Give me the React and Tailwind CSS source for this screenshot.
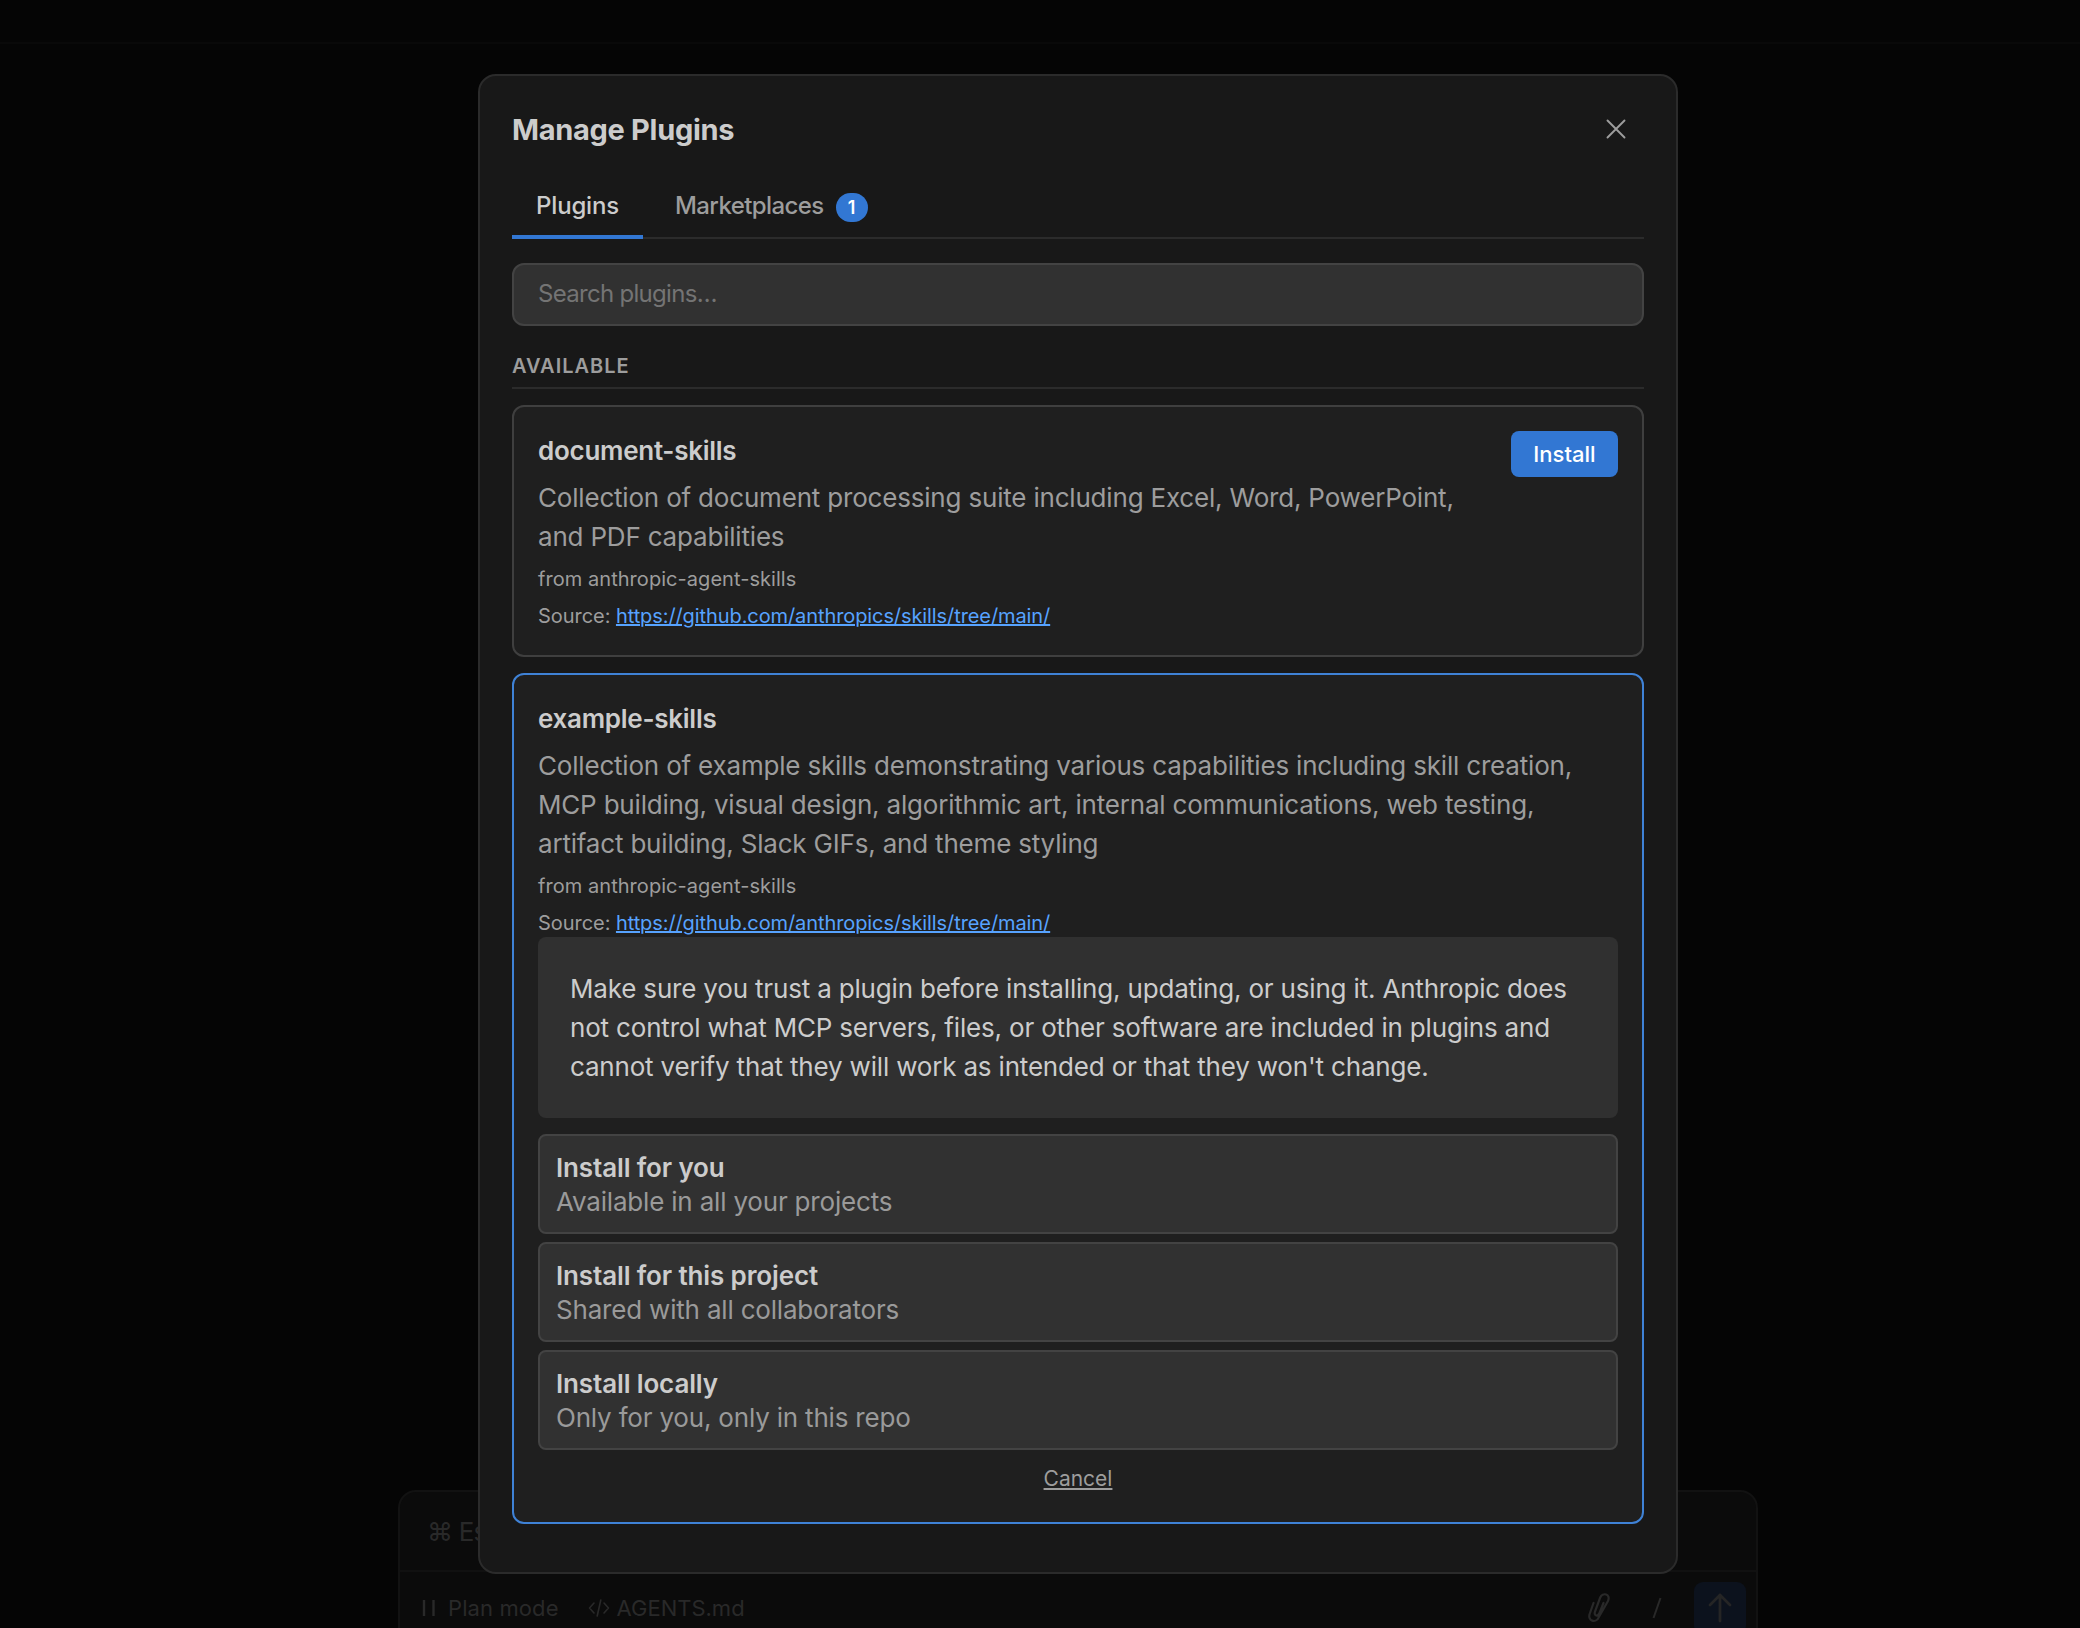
import React from "react";

function Plugin({ name, description, action, active, children }) {
  return (
    <section
      className={
        active
          ? "h-[851px] rounded-xl border-2 border-[#3f82d6] bg-[#1f1f1f] px-6 pt-6"
          : "h-[252px] rounded-xl border-2 border-[#3f3f3f] bg-[#1f1f1f] px-6 pt-6"
      }
    >
      <div className="flex items-start justify-between gap-4">
        <div className="min-w-0">
          <h3 className="text-[26px]/[39px] font-semibold tracking-[-0.27px] text-[#cccccc]">{name}</h3>
          <div className="mt-2 text-[26px]/[39px] tracking-[-0.19px] text-[#9d9d9d]">
            {description.map((line) => (
              <p key={line} className="whitespace-nowrap">{line}</p>
            ))}
          </div>
          <p className="mt-2.5 text-[20px]/[26px] tracking-[0.05px] text-[#9d9d9d]">from anthropic-agent-skills</p>
          <p className="mt-[11px] mb-px text-[20px]/[26px] tracking-[-0.05px] text-[#9d9d9d]">
            Source:{" "}
            <a className="tracking-[-0.09px] text-[#57a3ff] underline">https://github.com/anthropics/skills/tree/main/</a>
          </p>
        </div>
        {action}
      </div>
      {children}
    </section>
  );
}

function Option({ title, detail }) {
  return (
    <button className="block h-[100px] w-full rounded-lg border-2 border-[#434343] bg-[#313131] px-4 pt-[15px] pb-[13px] text-left text-[26px]/[34px]">
      <div className="font-semibold tracking-[-0.13px] text-[#cccccc]">{title}</div>
      <div className="tracking-[-0.19px] text-[#9a9a9a]">{detail}</div>
    </button>
  );
}

function Composer() {
  return (
    <div className="absolute top-[1490px] left-[398px] h-[200px] w-[1360px] rounded-[18px] border-2 border-[#121212] bg-[#0b0b0b] text-[#292929]">
      <div className="flex h-[80px] items-center border-b-2 border-[#111111] px-[27px] text-[26px] tracking-[-0.8px]">⌘ Esc to focus</div>
      <div className="flex h-[72px] items-center pr-[10px] pl-[22px] text-[22px]">
        <svg width="14" height="18" viewBox="0 0 14 18" stroke="currentColor" strokeWidth="2.4">
          <path d="M2 1v16M11.5 1v16" />
        </svg>
        <span className="ml-3 tracking-[0.1px]">Plan mode</span>
        <svg className="ml-[29px]" width="22" height="18" viewBox="0 0 22 18" fill="none" stroke="currentColor" strokeWidth="1.6" strokeLinecap="round" strokeLinejoin="round">
          <path d="M6 4L1.5 9L6 14M16 4l4.5 5L16 14M12.8 1L9.2 17" />
        </svg>
        <span className="ml-[7px]">AGENTS.md</span>
        <div className="flex-1" />
        <svg width="24" height="30" viewBox="0 0 24 30" fill="none" stroke="currentColor" strokeWidth="2.2" strokeLinecap="round">
          <path d="M6.5 10L2.8 20.5C0 28 9 31 12 23.8L21 8C24 1 15.5-1 13.2 4.5L8 18.5C6.5 23 11 24 12.5 20L16.5 10" />
        </svg>
        <svg className="ml-[41px]" width="10" height="22" viewBox="0 0 10 22" stroke="currentColor" strokeWidth="2">
          <path d="M8.5 1L1.500 21" />
        </svg>
        <div className="ml-8 flex size-[52px] items-center justify-center rounded-[9px] bg-[#0c121d]">
          <svg width="24" height="30" viewBox="0 0 24 30" fill="none" stroke="#252525" strokeWidth="2.8" strokeLinecap="round" strokeLinejoin="round">
            <path d="M12 28V2M2 12L12 2l10 10" />
          </svg>
        </div>
      </div>
    </div>
  );
}

export default function App() {
  return (
    <div className="relative h-[1628px] w-[2080px] overflow-hidden bg-[#050505] font-['Inter',sans-serif]">
      <div className="h-11 border-b-2 border-[#090909]" />
      <Composer />
      <main className="absolute top-[74px] left-[478px] h-[1500px] w-[1200px] rounded-[18px] border-2 border-[#2b2b2b] bg-[#181818] px-8">
        <header className="flex h-[105px] items-center justify-between">
          <h1 className="pt-0.5 text-[29px] font-bold tracking-[-0.3px] text-[#cccccc]">Manage Plugins</h1>
          <svg className="mr-[18px]" width="20" height="20" viewBox="0 0 20 20" stroke="#9d9d9d" strokeWidth="1.9" strokeLinecap="round">
            <path d="M1.5 1.5l17 17M18.5 1.5l-17 17" />
          </svg>
        </header>
        <nav className="flex h-[58px] border-b-2 border-[#2b2b2b] text-[24px]">
          <div className="flex h-[58px] w-[131px] items-center justify-center border-b-4 border-[#3277d3] pb-[5px] font-medium tracking-[-0.2px] text-[#cccccc]">Plugins</div>
          <div className="ml-8 flex items-center pb-[7px] font-medium tracking-[-0.6px] text-[#9d9d9d]">
            Marketplaces
            <span className="mt-1 ml-3 flex h-[29px] w-8 items-center justify-center rounded-full bg-[#3277d3] text-[18px] font-semibold tracking-normal text-white">1</span>
          </div>
        </nav>
        <input
          placeholder="Search plugins…"
          className="mt-6 block h-[63px] w-full rounded-xl border-2 border-[#434343] bg-[#313131] px-6 pb-0.5 text-[24px] tracking-[-0.7px] placeholder:text-[#747474]"
        />
        <h2 className="mt-6 h-[39px] border-b-2 border-[#2b2b2b] pt-px text-[20px]/[30px] font-semibold tracking-[1px] text-[#9d9d9d]">AVAILABLE</h2>
        <div className="mt-4 flex flex-col gap-4">
          <Plugin
            name="document-skills"
            description={["Collection of document processing suite including Excel, Word, PowerPoint,", "and PDF capabilities"]}
            action={<button className="h-[46px] w-[107px] shrink-0 rounded-lg bg-[#3277d3] text-[22px] font-medium text-white">Install</button>}
          />
          <Plugin
            active
            name="example-skills"
            description={[
              "Collection of example skills demonstrating various capabilities including skill creation,",
              "MCP building, visual design, algorithmic art, internal communications, web testing,",
              "artifact building, Slack GIFs, and theme styling",
            ]}
          >
            <div className="h-[181px] rounded-lg bg-[#303030] p-8 text-[26px]/[39px] tracking-[-0.18px] whitespace-nowrap text-[#cccccc]">
              <p>Make sure you trust a plugin before installing, updating, or using it. Anthropic does</p>
              <p>not control what MCP servers, files, or other software are included in plugins and</p>
              <p>cannot verify that they will work as intended or that they won't change.</p>
            </div>
            <div className="mt-4 flex flex-col gap-2">
              <Option title="Install for you" detail="Available in all your projects" />
              <Option title="Install for this project" detail="Shared with all collaborators" />
              <Option title="Install locally" detail="Only for you, only in this repo" />
            </div>
            <div className="mt-3 text-center">
              <button className="text-[21px]/[34px] text-[#9d9d9d] underline">Cancel</button>
            </div>
          </Plugin>
        </div>
      </main>
    </div>
  );
}
